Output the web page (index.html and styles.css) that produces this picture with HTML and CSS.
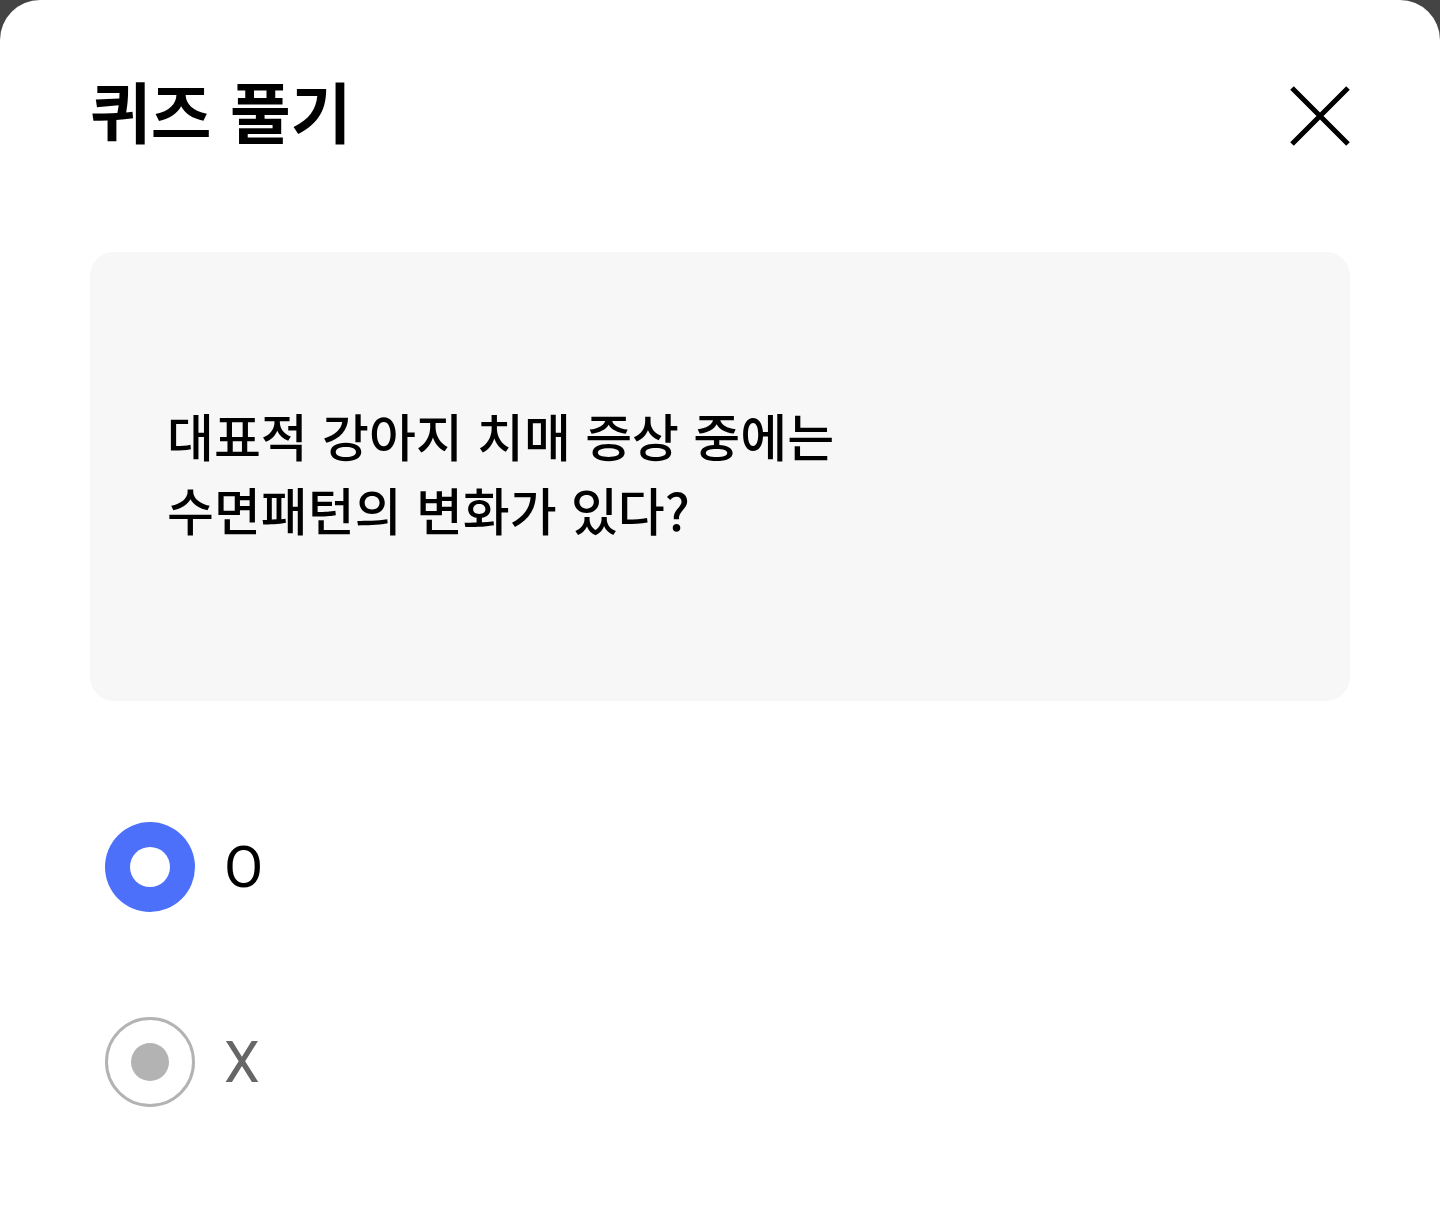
FILE: index.html
```html
<!DOCTYPE html>
<html lang="ko">
<head>
<meta charset="utf-8">
<title>퀴즈 풀기</title>
<link rel="stylesheet" href="styles.css">
</head>
<body>
<div class="sheet">
  <header class="header">
    <h1 class="title">퀴즈 풀기</h1>
    <button class="close" aria-label="닫기">
      <svg width="60" height="60" viewBox="0 0 60 60"><path d="M2 2 L58 58 M58 2 L2 58" stroke="#000" stroke-width="5" fill="none"/></svg>
    </button>
  </header>
  <section class="card">
    <p class="question">대표적 강아지 치매 증상 중에는<br>수면패턴의 변화가 있다?</p>
  </section>
  <ul class="options">
    <li class="option selected"><span class="radio"></span><span class="label">O</span></li>
    <li class="option"><span class="radio"></span><span class="label">X</span></li>
  </ul>
</div>
</body>
</html>
```

FILE: styles.css
```css
html, body {
  margin: 0;
  padding: 0;
  background: #444444;
}
body {
  font-family: "Noto Sans CJK KR", "Noto Sans", sans-serif;
  color: #000;
}
.sheet {
  background: #fff;
  border-radius: 40px 40px 0 0;
  min-height: 1211px;
  box-sizing: border-box;
  padding: 53px 90px 0 90px;
}
.header {
  height: 120px;
  display: flex;
  align-items: center;
  justify-content: space-between;
}
.title {
  margin: 0 0 8px 0;
  font-size: 66px;
  font-weight: 700;
  line-height: 1;
}
.close {
  border: 0;
  background: none;
  padding: 0;
  width: 60px;
  height: 60px;
  margin-top: 6px;
  display: flex;
}
.card {
  margin-top: 79px;
  height: 449px;
  background: #f7f7f7;
  border-radius: 24px;
  display: flex;
  align-items: center;
  padding-left: 77px;
}
.question {
  margin: 0;
  font-size: 51px;
  font-weight: 500;
  line-height: 74px;
  padding-bottom: 10px;
}
.options {
  list-style: none;
  margin: 121px 0 0 0;
  padding: 0 0 0 15px;
  display: flex;
  flex-direction: column;
  gap: 105px;
}
.option {
  display: flex;
  align-items: center;
  height: 90px;
  gap: 29px;
}
.radio {
  width: 90px;
  height: 90px;
  box-sizing: border-box;
  border-radius: 50%;
  border: 3px solid #b3b3b3;
  display: flex;
  align-items: center;
  justify-content: center;
}
.radio::after {
  content: "";
  width: 38px;
  height: 38px;
  border-radius: 50%;
  background: #b3b3b3;
}
.option.selected .radio {
  border: 0;
  background: #4c70fa;
}
.option.selected .radio::after {
  width: 40px;
  height: 40px;
  background: #fff;
}
.label {
  font-family: Roboto, "Noto Sans", sans-serif;
  font-size: 57px;
  line-height: 1;
  color: #666;
}
.option.selected .label {
  color: #000;
}
```
